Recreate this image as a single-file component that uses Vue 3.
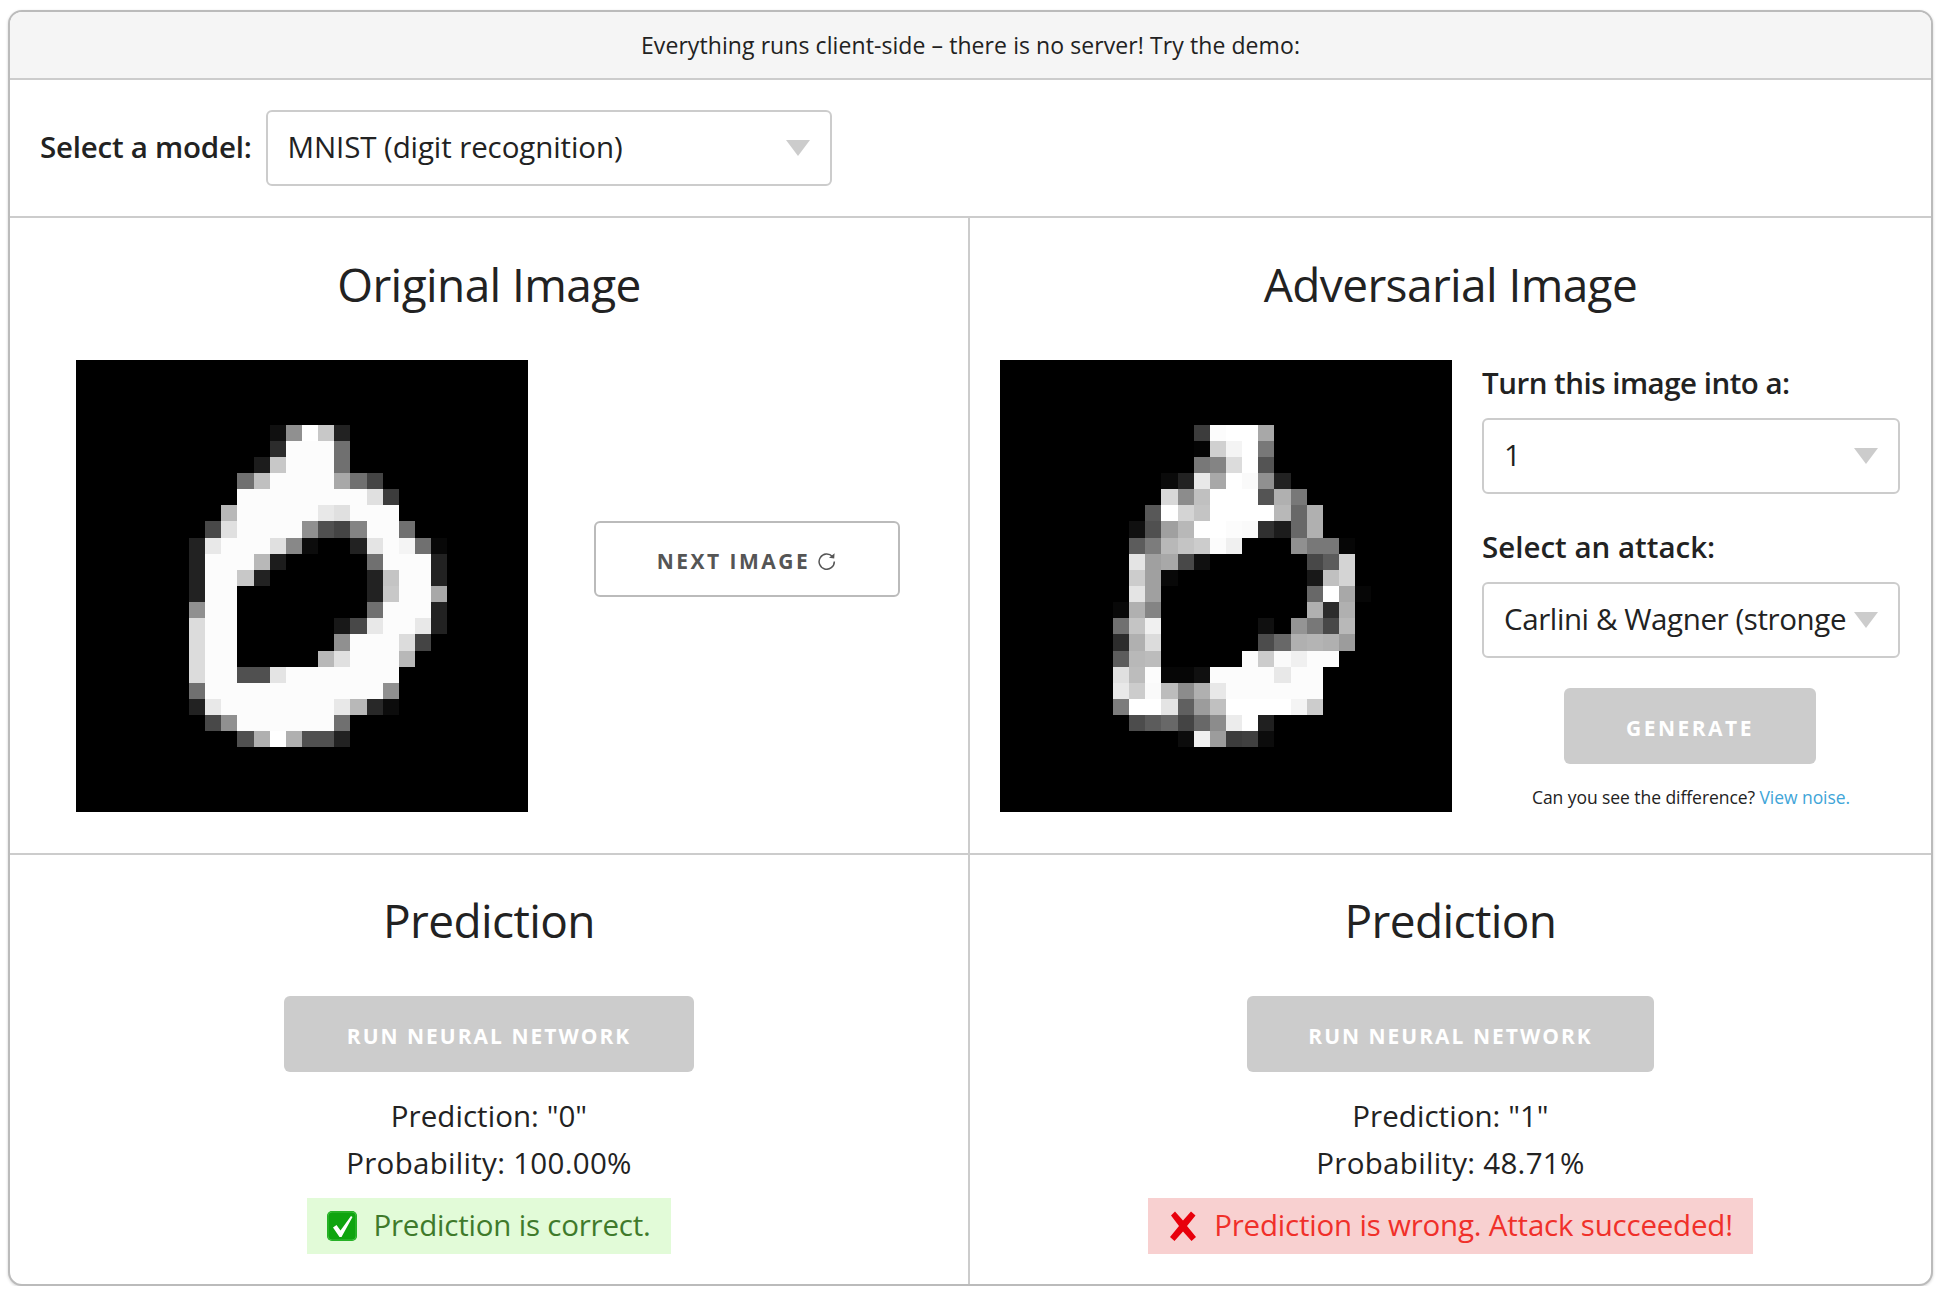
<script setup>
const originalRows = {
  4: [12, '10 90 ff c8 22'],
  5: [12, '2c fc fc fc 70'],
  6: [11, '1c c8 fc fc fc 70'],
  7: [10, '70 c0 fc fc fc fc a8 70 44'],
  8: [10, 'fc fc fc fc fc fc fc fc e0 3c'],
  9: [9, 'b8 fc fc fc fc fc e8 e0 fc fc fc'],
  10: [8, '48 e0 fc fc fc fc 90 50 44 84 fc fc 70'],
  11: [7, '22 e8 fc fc fc e0 88 0c 00 00 22 e4 fc f4 70 08'],
  12: [7, '22 fc fc fc b8 1c 00 00 00 00 00 70 fc fc fc 22'],
  13: [7, '22 fc fc c8 22 00 00 00 00 00 00 22 c4 fc fc 22'],
  14: [7, '22 fc fc 00 00 00 00 00 00 00 00 22 c8 fc fc a8'],
  15: [7, '90 fc fc 00 00 00 00 00 00 00 00 70 fc fc fc 22'],
  16: [7, 'dc fc fc 00 00 00 00 00 00 18 48 e8 fc fc e8 22'],
  17: [7, 'dc fc fc 00 00 00 00 00 00 90 fc fc fc dc 44'],
  18: [7, 'dc fc fc 00 00 00 00 00 b8 e0 fc fc fc b8'],
  19: [7, 'dc fc fc 50 50 e4 fc fc fc fc fc fc fc'],
  20: [7, '70 fc fc fc fc fc fc fc fc fc fc fc 90'],
  21: [7, '22 e8 fc fc fc fc fc fc fc e8 b8 28 0c'],
  22: [8, '48 90 fc fc fc fc fc fc 70'],
  23: [10, '50 b0 ff b0 50 50 22']
}

const adversarialRows = {
  4: [12, '3c fc ff ff a8'],
  5: [12, '04 d0 f4 ff 78'],
  6: [12, '78 84 dc ff 54'],
  7: [10, '0a 22 e8 a8 ff fa 90 22'],
  8: [10, 'd8 8c c0 ff ff ff 54 b0 78'],
  9: [9, '58 ff d4 c4 ff ff ff ff b8 68 b0'],
  10: [8, '10 50 a0 b8 ff ff fc fa 30 1c 68 b0'],
  11: [8, '5c 7c b8 c4 cc fc f0 00 00 00 90 78 78 06'],
  12: [8, 'e4 a0 a8 48 10 00 00 00 00 00 00 48 5c d4'],
  13: [8, 'cc a0 08 00 00 00 00 00 00 00 00 18 c0 d4'],
  14: [8, 'e4 a0 00 00 00 00 00 00 00 00 00 68 ff a8 06'],
  15: [7, '08 b0 84 00 00 00 00 00 00 00 00 00 b0 2c b0'],
  16: [7, '70 c4 f0 00 00 00 00 00 00 10 00 94 78 48 b8'],
  17: [7, '2c b0 dc 00 00 00 00 00 00 4c 68 b0 b4 b0 9c'],
  18: [7, '5c b8 bc 00 00 00 00 00 fc cc fa f0 fc fc'],
  19: [7, 'e0 bc fc 06 06 10 fc fc fc fc e8 fc fc'],
  20: [7, 'e8 cc fa bc 8c b0 e8 fc fc fc fc fc fc'],
  21: [7, '7c ff ff e4 60 9c c0 ff ff ff ff f4 cc'],
  22: [8, '4c 5c 68 44 68 8c ec ff 20'],
  23: [11, '0c f0 9c 3c 40 0c']
}

function toCells(rows) {
  const cells = []
  for (const [y, [start, values]] of Object.entries(rows)) {
    values.split(' ').forEach((hex, i) => {
      if (hex !== '00') cells.push({ x: start + i, y: Number(y), fill: '#' + hex + hex + hex })
    })
  }
  return cells
}

const originalCells = toCells(originalRows)
const adversarialCells = toCells(adversarialRows)
</script>

<template>
  <div class="card">
    <div class="banner">Everything runs client-side – there is no server! Try the demo:</div>

    <div class="model-row">
      <span class="label model-label">Select a model:</span>
      <div class="select model-select">
        <span class="select-text">MNIST (digit recognition)</span>
        <span class="arrow"></span>
      </div>
    </div>

    <div class="grid">
      <section class="cell images left">
        <h2>Original Image</h2>
        <div class="image-row">
          <div class="digit">
            <svg viewBox="0 0 28 28" width="452" height="452" shape-rendering="crispEdges">
              <rect v-for="c in originalCells" :key="c.x + '-' + c.y" :x="c.x" :y="c.y" width="1" height="1" :fill="c.fill" />
            </svg>
          </div>
          <button class="next">
            <span>NEXT IMAGE</span>
            <svg class="refresh" viewBox="0 0 20 18" width="20" height="18" fill="none" stroke="#555" stroke-width="1.5">
              <path d="M15.4 4.6A7.6 7.6 0 1 0 17.3 9.6" />
              <path d="M17.6 1.2L17.2 6.6L12 5.8Z" fill="#555" stroke="none" />
            </svg>
          </button>
        </div>
      </section>

      <section class="cell images">
        <h2>Adversarial Image</h2>
        <div class="image-row adv">
          <div class="digit">
            <svg viewBox="0 0 28 28" width="452" height="452" shape-rendering="crispEdges">
              <rect v-for="c in adversarialCells" :key="c.x + '-' + c.y" :x="c.x" :y="c.y" width="1" height="1" :fill="c.fill" />
            </svg>
          </div>
          <div class="controls">
            <span class="label turn">Turn this image into a:</span>
            <div class="select">
              <span class="select-text">1</span>
              <span class="arrow"></span>
            </div>
            <span class="label second">Select an attack:</span>
            <div class="select attack">
              <span class="select-text">Carlini &amp; Wagner (stronge</span>
              <span class="arrow"></span>
            </div>
            <button class="solid generate">GENERATE</button>
            <p class="hint">Can you see the difference? <a>View noise.</a></p>
          </div>
        </div>
      </section>

      <section class="cell result left bottom">
        <h2>Prediction</h2>
        <button class="solid run">RUN NEURAL NETWORK</button>
        <p class="line first">Prediction: "0"</p>
        <p class="line prob">Probability: 100.00%</p>
        <div class="alert ok">
          <svg viewBox="0 0 30 30" width="30" height="30">
            <rect width="30" height="30" rx="5" fill="#0fa40f" />
            <rect x="1" y="1" width="28" height="28" rx="4" fill="none" stroke="#5fd35f" stroke-width="1" opacity=".6" />
            <path d="M6 16.5L9.5 14L13.5 19.5L24 5L25.5 6L14.5 26L12.5 26Z" fill="#fff" />
          </svg>
          <span>Prediction is correct.</span>
        </div>
      </section>

      <section class="cell result bottom">
        <h2>Prediction</h2>
        <button class="solid run narrow">RUN NEURAL NETWORK</button>
        <p class="line first">Prediction: "1"</p>
        <p class="line prob">Probability: 48.71%</p>
        <div class="alert bad">
          <svg viewBox="0 0 30 30" width="30" height="30">
            <path d="M3 4.5L7 .5 15 9.5 23 .5 27.5 4.5 19 15 28 26 23.5 30 15 20.5 6.5 30 2 26 11 15z" fill="#e8000c" />
          </svg>
          <span>Prediction is wrong. Attack succeeded!</span>
        </div>
      </section>
    </div>
  </div>
</template>

<style>
html, body {
  margin: 0;
  background: #fff;
}
</style>

<style scoped>
.card {
  box-sizing: border-box;
  width: 1925px;
  height: 1276px;
  margin: 10px 0 0 8px;
  border: 2px solid #bbb;
  border-radius: 14px;
  box-shadow: 0 1px 3px rgba(0, 0, 0, 0.18);
  overflow: hidden;
  background: #fff;
  color: #222;
  font-family: "Open Sans", sans-serif;
  font-size: 29.5px;
  display: flex;
  flex-direction: column;
}
.banner {
  height: 68px;
  box-sizing: border-box;
  flex: none;
  background: #f5f5f5;
  border-bottom: 2px solid #ccc;
  display: flex;
  align-items: center;
  justify-content: center;
  font-size: 23px;
  letter-spacing: 0.08px;
}
.model-row {
  flex: none;
  height: 138px;
  box-sizing: border-box;
  border-bottom: 2px solid #ccc;
  padding-left: 30px;
  display: flex;
  align-items: center;
  gap: 14px;
}
.label {
  font-weight: 600;
  letter-spacing: -0.23px;
}
.model-label {
  padding-bottom: 3px;
}
.select {
  box-sizing: border-box;
  height: 76px;
  border: 2px solid #ccc;
  border-radius: 6px;
  background: #fff;
  padding: 0 20px 0 20px;
  display: flex;
  align-items: center;
  gap: 8px;
  letter-spacing: -0.1px;
}
.model-select {
  width: 566px;
}
.attack {
  letter-spacing: -0.4px;
}
.select-text {
  flex: 1;
  min-width: 0;
  white-space: nowrap;
  margin-top: -3px;
}
.arrow {
  flex: none;
  width: 0;
  height: 0;
  border-left: 12px solid transparent;
  border-right: 12px solid transparent;
  border-top: 16px solid #ccc;
}
.grid {
  flex: 1;
  display: grid;
  grid-template-columns: 960px 1fr;
  grid-template-rows: 635px 1fr;
}
.cell {
  box-sizing: border-box;
  min-width: 0;
}
.left {
  border-right: 2px solid #ccc;
}
.bottom {
  border-top: 2px solid #ccc;
}
h2 {
  margin: 0;
  text-align: center;
  font-weight: 400;
  font-size: 46px;
  line-height: 60px;
  letter-spacing: -0.6px;
}
.images h2 {
  padding-top: 36px;
}
.image-row {
  margin-top: 46px;
  display: flex;
  align-items: center;
  padding-left: 66px;
}
.image-row.adv {
  padding-left: 30px;
  align-items: flex-start;
}
.digit {
  flex: none;
  width: 452px;
  height: 452px;
  background: #000;
  overflow: hidden;
}
.digit svg {
  display: block;
  filter: blur(0.5px);
}
button {
  font-family: inherit;
  font-weight: 700;
  font-size: 21px;
  letter-spacing: 2.5px;
  padding: 3px 0 0;
  cursor: pointer;
  box-sizing: border-box;
}
.next {
  margin: 0 0 54px 66px;
  width: 306px;
  height: 76px;
  background: #fff;
  border: 2px solid #bbb;
  border-radius: 6px;
  color: #555;
  display: flex;
  align-items: center;
  justify-content: center;
  gap: 7px;
}
.refresh {
  margin-top: 1px;
}
.controls {
  margin-left: 30px;
  width: 418px;
  display: flex;
  flex-direction: column;
  padding-top: 5px;
}
.controls .label {
  line-height: 36px;
  margin-bottom: 17px;
}
.controls .second {
  margin-top: 35px;
  letter-spacing: 0;
}
.controls .turn {
  letter-spacing: -0.5px;
}
.solid {
  background: #ccc;
  border: none;
  border-radius: 6px;
  color: #fff;
  height: 76px;
}
.generate {
  width: 252px;
  margin: 30px 0 0 82px;
}
.hint {
  margin: 21px 0 0;
  font-size: 17.5px;
  line-height: 24px;
  text-align: center;
  letter-spacing: -0.06px;
}
.hint a {
  color: #3fa5d8;
}
.result {
  display: flex;
  flex-direction: column;
  align-items: center;
}
.result h2 {
  padding-top: 35px;
}
.run {
  margin-top: 46px;
  width: 410px;
  letter-spacing: 2px;
}
.run.narrow {
  width: 407px;
}
.line {
  margin: 0;
  line-height: 47px;
  letter-spacing: 0.05px;
}
.line.prob {
  letter-spacing: 0.3px;
}
.line.first {
  margin-top: 20px;
}
.alert {
  margin-top: 12px;
  height: 56px;
  padding: 0 20px;
  display: flex;
  align-items: center;
  gap: 16px;
  letter-spacing: -0.2px;
}
.alert span {
  margin-top: -3px;
}
.ok {
  background: #e2fbd8;
  color: #3f7a2b;
}
.bad {
  background: #f8d0d0;
  color: #f0302a;
}
</style>
